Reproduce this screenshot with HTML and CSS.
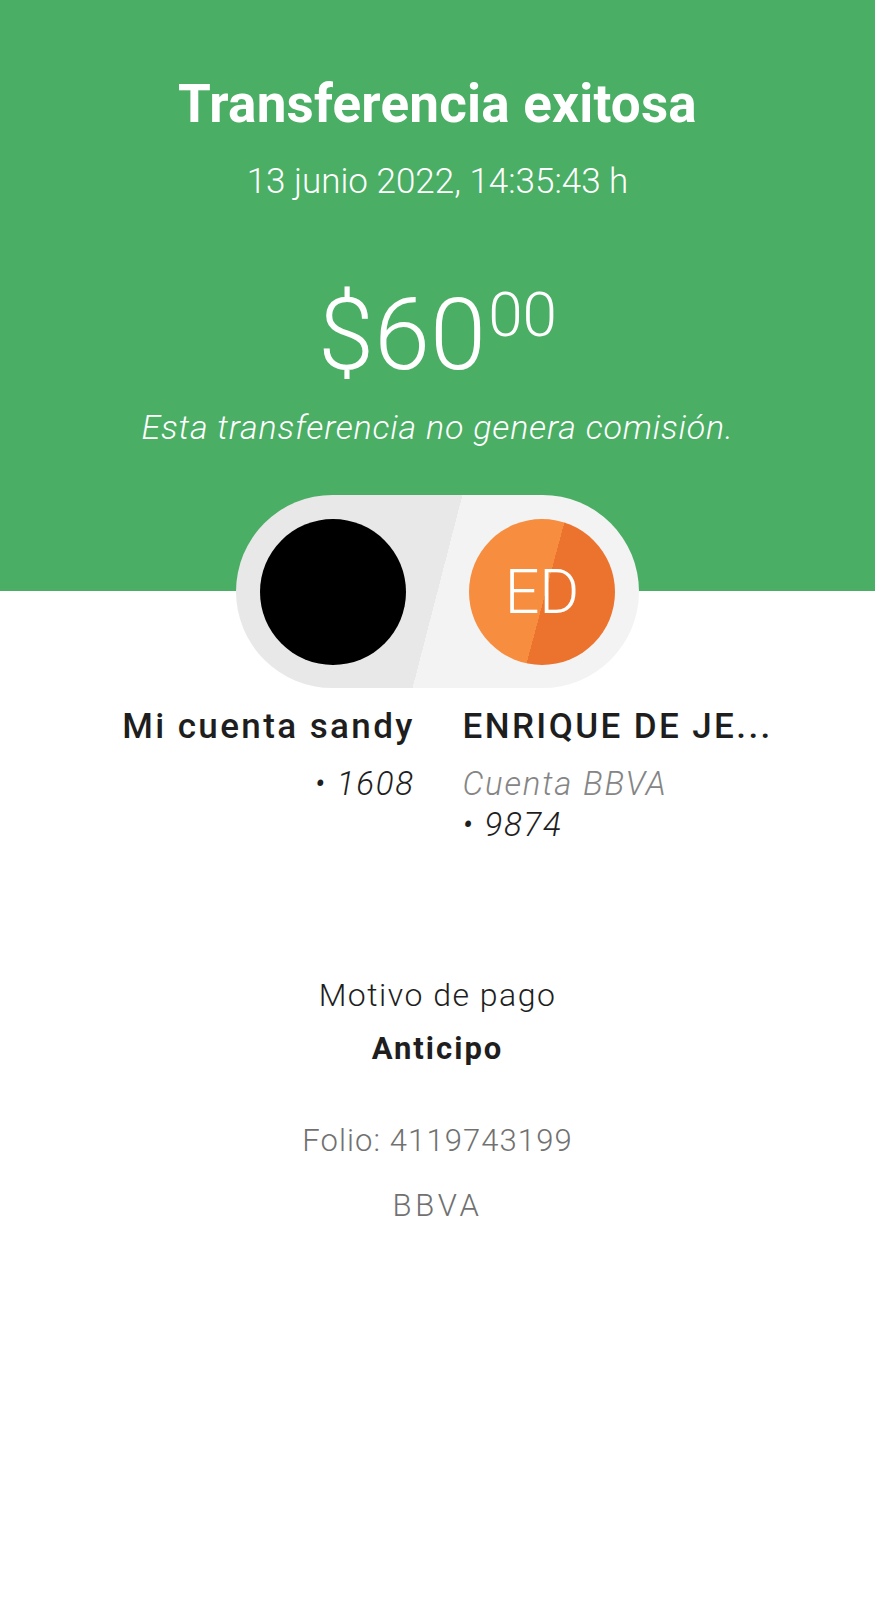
FILE: index.html
```html
<!DOCTYPE html>
<html lang="es">
<head>
<meta charset="utf-8">
<title>Transferencia exitosa</title>
<link rel="stylesheet" href="styles.css">
</head>
<body>
<div class="screen">
  <header class="hero">
    <h1 class="title">Transferencia exitosa</h1>
    <p class="date">13 junio 2022, 14:35:43 h</p>
    <p class="amount"><span class="amount-main">$60</span><span class="amount-cents">00</span></p>
    <p class="note">Esta transferencia no genera comisión.</p>
  </header>
  <div class="pill-row">
    <div class="pill">
      <div class="avatar avatar-black"></div>
      <div class="avatar avatar-orange">ED</div>
    </div>
  </div>
  <section class="parties">
    <div class="party party-from">
      <div class="party-name">Mi cuenta sandy</div>
      <div class="party-sub">• 1608</div>
    </div>
    <div class="party party-to">
      <div class="party-name">ENRIQUE DE JE...</div>
      <div class="party-sub muted">Cuenta BBVA</div>
      <div class="party-sub">• 9874</div>
    </div>
  </section>
  <section class="details">
    <p class="detail-label">Motivo de pago</p>
    <p class="detail-value">Anticipo</p>
    <p class="detail-meta folio">Folio: 4119743199</p>
    <p class="detail-meta bank">BBVA</p>
  </section>
</div>
</body>
</html>
```

FILE: styles.css
```css
* { box-sizing: border-box; }
html, body { margin: 0; padding: 0; background: #ffffff; }
body { font-family: Roboto, "Liberation Sans", sans-serif; color: #1e1e1e; }
p, h1 { margin: 0; }

.screen { width: 875px; min-height: 1600px; background: #fff; }

.hero {
  background: #4aae64;
  color: #ffffff;
  text-align: center;
  padding: 76px 0 51px;
}
.title {
  font-size: 53px;
  line-height: 56px;
  font-weight: 700;
  letter-spacing: 0.2px;
}
.date {
  margin-top: 32px;
  font-size: 35px;
  line-height: 36px;
  font-weight: 300;
}
.amount {
  margin-top: 80px;
  font-size: 101px;
  line-height: 110px;
  font-weight: 300;
}
.amount-cents {
  font-size: 62px;
  line-height: 70px;
  vertical-align: top;
  margin-left: 2px;
}
.note {
  margin-top: 20px;
  font-size: 34px;
  line-height: 34px;
  font-weight: 300;
  font-style: italic;
  letter-spacing: 0.8px;
}

.pill-row {
  display: flex;
  justify-content: center;
  background: linear-gradient(to bottom, #4aae64 0, #4aae64 50%, #ffffff 50%, #ffffff 100%);
}
.pill {
  width: 403px;
  height: 193px;
  border-radius: 97px;
  padding: 0 24px;
  display: flex;
  align-items: center;
  justify-content: space-between;
  background: linear-gradient(104.5deg, #e8e8e8 0, #e8e8e8 50%, #f3f3f3 50%, #f3f3f3 100%);
}
.avatar {
  width: 146px;
  height: 146px;
  border-radius: 50%;
  display: flex;
  align-items: center;
  justify-content: center;
}
.avatar-black { background: #000; }
.avatar-orange {
  background: linear-gradient(105deg, #f68d3f 0, #f68d3f 52%, #eb732e 52%, #eb732e 100%);
  color: #fff;
  font-size: 61px;
  font-weight: 300;
}

.parties {
  display: grid;
  grid-template-columns: 1fr 1fr;
  column-gap: 50px;
  margin-top: 19px;
}
.party-from { text-align: right; }
.party-to { text-align: left; }
.party-name {
  font-size: 35px;
  line-height: 40px;
  font-weight: 500;
  letter-spacing: 2.4px;
  color: #1e1e1e;
  white-space: nowrap;
}
.party-from .party-name,
.party-from .party-sub { margin-right: -2.4px; }
.party-sub {
  font-size: 33px;
  line-height: 41px;
  font-weight: 300;
  font-style: italic;
  letter-spacing: 1.8px;
  color: #1e1e1e;
}
.party-name + .party-sub { margin-top: 16px; }
.party-sub.muted { color: #858585; }

.details {
  margin-top: 130px;
  text-align: center;
}
.detail-label {
  font-size: 32px;
  line-height: 40px;
  font-weight: 300;
  letter-spacing: 1.5px;
  color: #1e1e1e;
}
.detail-value {
  margin-top: 14px;
  font-size: 31px;
  line-height: 40px;
  font-weight: 700;
  letter-spacing: 2px;
  color: #1e1e1e;
}
.detail-meta {
  font-size: 31px;
  line-height: 40px;
  font-weight: 300;
  color: #717171;
}
.folio { margin-top: 52px; letter-spacing: 1.1px; }
.bank { margin-top: 25px; letter-spacing: 3.8px; }
```
